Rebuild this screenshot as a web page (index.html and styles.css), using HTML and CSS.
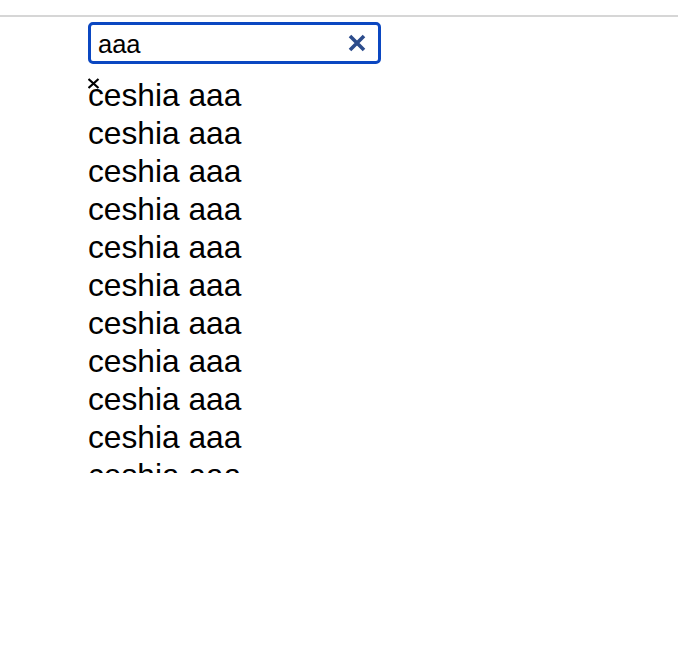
FILE: index.html
```html
<!DOCTYPE html>
<html>
<head>
<meta charset="utf-8">
<link rel="stylesheet" href="styles.css">
</head>
<body>
<div class="topbar"></div>
<div class="content">
  <div class="search">
    <span class="search-text">aaa</span>
    <svg class="clear" width="20" height="18" viewBox="0 0 20 18"><path d="M3 2 L17 16 M17 2 L3 16" stroke="#2c4c8c" stroke-width="3.6" stroke-linecap="butt" fill="none"/></svg>
  </div>
  <div class="list">
    <div class="item first">ceshia aaa<svg class="mark" width="13" height="11" viewBox="0 0 13 11"><path d="M1.5 1 L11.5 10 M11.5 1 L1.5 10" stroke="#000" stroke-width="2.2" fill="none"/></svg></div>
    <div class="item">ceshia aaa</div>
    <div class="item">ceshia aaa</div>
    <div class="item">ceshia aaa</div>
    <div class="item">ceshia aaa</div>
    <div class="item">ceshia aaa</div>
    <div class="item">ceshia aaa</div>
    <div class="item">ceshia aaa</div>
    <div class="item">ceshia aaa</div>
    <div class="item">ceshia aaa</div>
    <div class="item">ceshia aaa</div>
    <div class="item">ceshia aaa</div>
  </div>
</div>
</body>
</html>
```
FILE: styles.css
```css
html, body {
  margin: 0;
  padding: 0;
  background: #fff;
  font-family: "Liberation Sans", Arial, sans-serif;
  color: #000;
}
.topbar {
  height: 15px;
  border-bottom: 2px solid #d6d6d6;
}
.content {
  padding-left: 88px;
  padding-top: 5px;
}
.search {
  box-sizing: border-box;
  width: 293px;
  height: 42px;
  border: 3px solid #0b47c1;
  border-radius: 5px;
  display: flex;
  align-items: center;
  justify-content: space-between;
  padding: 0 11px 0 7px;
}
.search-text {
  font-size: 25.5px;
  line-height: 30px;
  margin-top: 1px;
}
.clear {
  display: block;
}
.list {
  margin-top: 12px;
  height: 397px;
  overflow: hidden;
}
.item {
  font-size: 31.7px;
  line-height: 38px;
  white-space: nowrap;
}
.first {
  position: relative;
}
.mark {
  position: absolute;
  left: -1px;
  top: 2px;
}
```
